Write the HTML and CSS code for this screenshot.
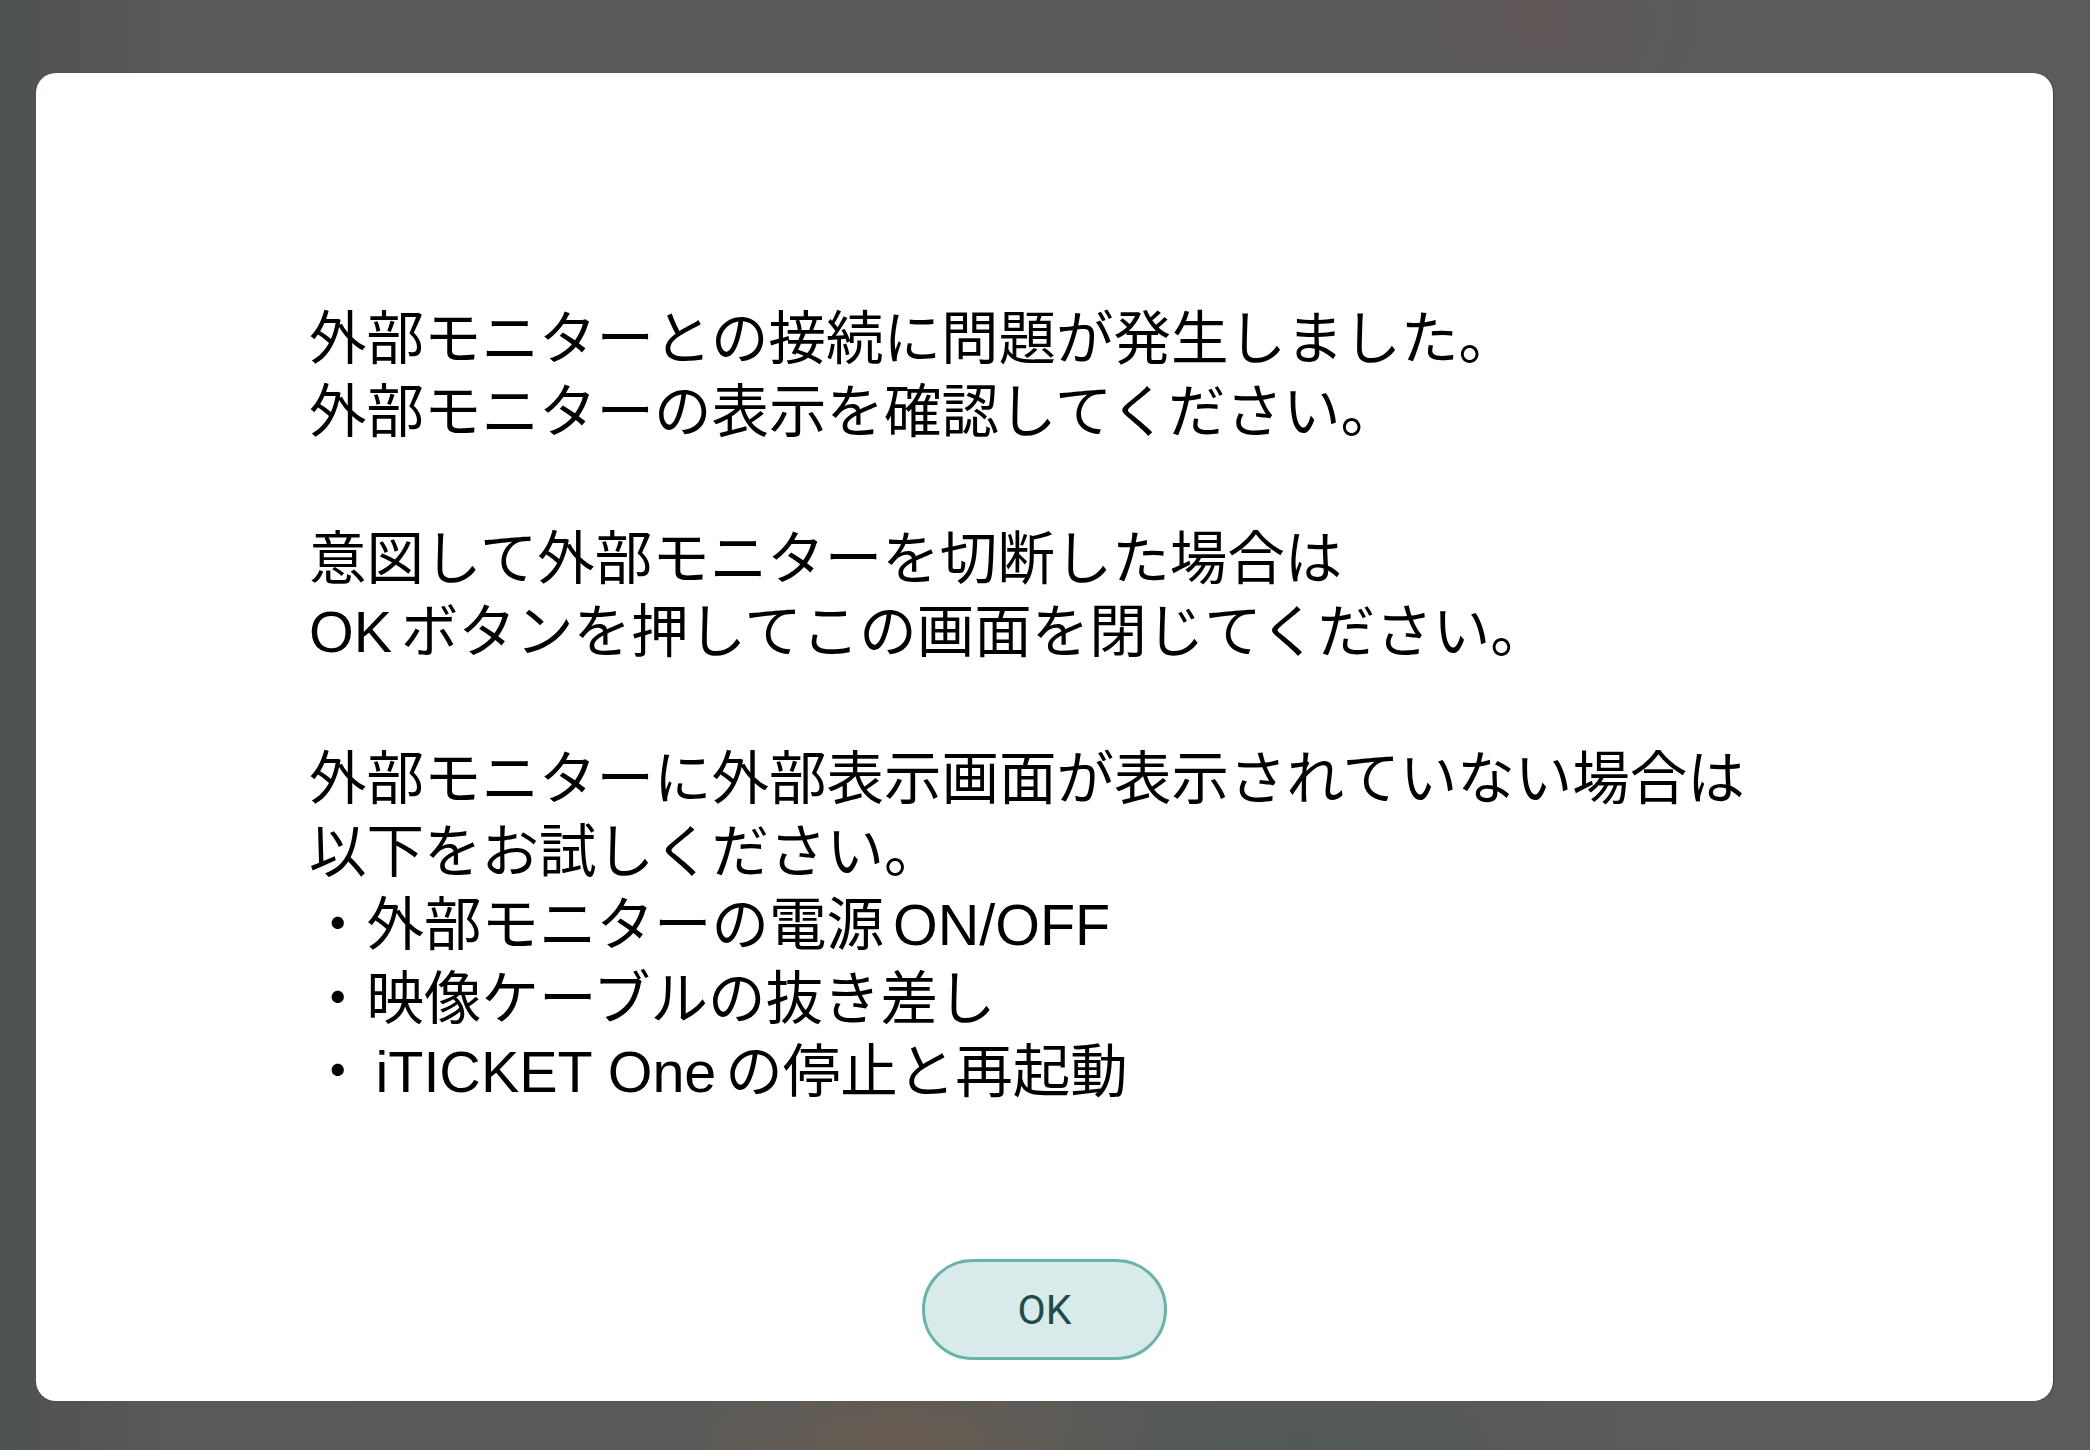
FILE: index.html
```html
<!DOCTYPE html>
<html lang="ja">
<head>
  <meta charset="UTF-8">
  <meta name="viewport" content="width=device-width, initial-scale=1.0">
  <title>外部モニター</title>
  <link rel="stylesheet" href="styles.css">
</head>
<body>

  <div class="dialog">
    <div class="message">
      <p>外部モニターとの接続に問題が発生しました。<br>外部モニターの表示を確認してください。</p>
      <p>意図して外部モニターを切断した場合は<br><span class="en en-end">OK</span>ボタンを押してこの画面を閉じてください。</p>
      <p>外部モニターに外部表示画面が表示されていない場合は<br>以下をお試しください。<br>・外部モニターの電源<span class="en en-start">ON/OFF</span><br>・映像ケーブルの抜き差し<br>・<span class="en en-start en-end">iTICKET One</span>の停止と再起動</p>
    </div>

    <button class="ok">OK</button>
  </div>

</body>
</html>
```

FILE: styles.css
```css
html, body {
  margin: 0;
  padding: 0;
}

body {
  height: 1450px;
  box-sizing: border-box;
  padding: 73px 37px 49px 36px;
  font-family: 'Liberation Sans', 'Noto Sans CJK JP', sans-serif;
  background-color: #595959;
  background-image:
    radial-gradient(ellipse 160px 120px at 1540px 20px, rgba(110, 80, 80, 0.35), transparent),
    radial-gradient(ellipse 260px 90px at 900px 1440px, rgba(120, 95, 70, 0.45), transparent),
    radial-gradient(ellipse 300px 80px at 1300px 1440px, rgba(70, 85, 85, 0.4), transparent),
    linear-gradient(90deg, #4e5251 0, #585959 8%, #5b5b5b 100%);
}

.dialog {
  height: 100%;
  box-sizing: border-box;
  background: #fff;
  border-radius: 20px;
  padding: 230px 40px 41px 273px;
  display: flex;
  flex-direction: column;
  box-shadow: 1px 0 1px rgba(0, 0, 0, 0.25);
}

.message {
  font-size: 57.5px;
  line-height: 73.3px;
  color: #000;
  flex: 1;
}

.message p {
  margin: 0 0 73.3px 0;
}

.message p:last-child {
  margin-bottom: 0;
}

/* spacing between latin words and kana, like the device does */
.en-start {
  margin-left: 9px;
}

.en-end {
  margin-right: 9px;
}

.ok {
  align-self: center;
  margin-left: -233px;
  width: 245px;
  height: 101px;
  border: 3px solid #68b3aa;
  border-radius: 51px;
  background-color: #d8eae9;
  color: #1e4c47;
  font-family: 'Roboto', sans-serif;
  font-size: 41px;
  cursor: pointer;
}
```
